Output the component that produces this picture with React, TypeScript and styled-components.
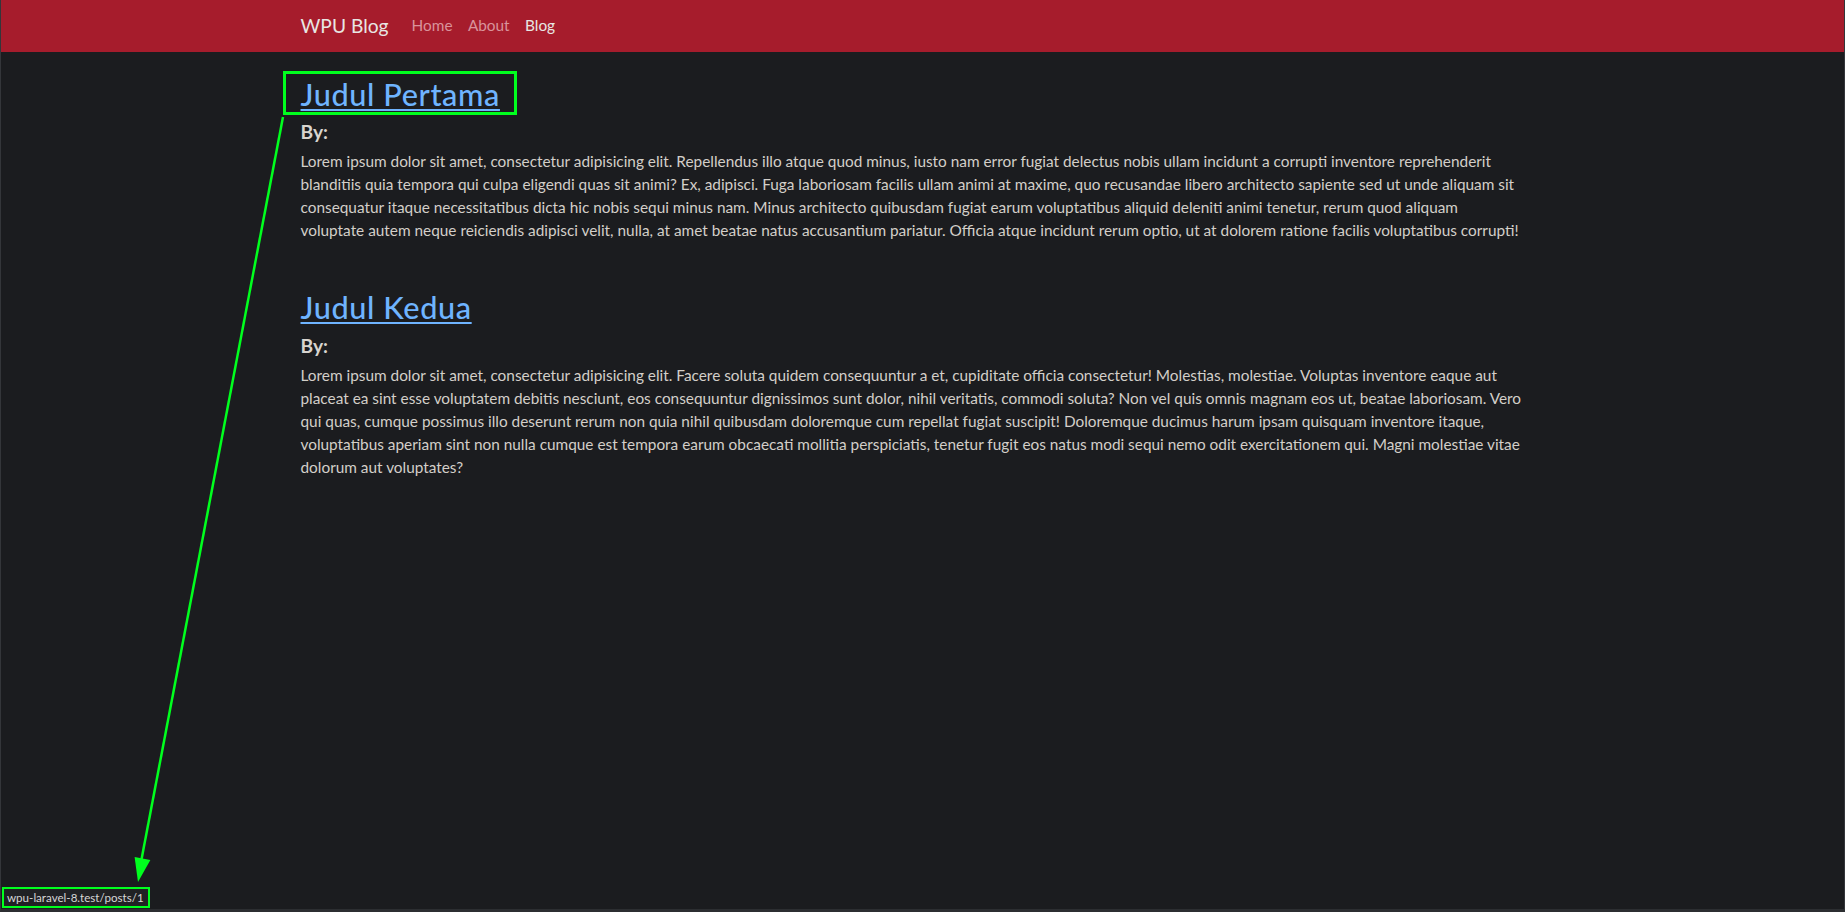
import React from 'react';
import styled, { createGlobalStyle } from 'styled-components';

const GlobalStyle = createGlobalStyle`
  html, body {
    margin: 0;
    padding: 0;
    background: #1b1c1f;
  }
  body {
    font-family: Lato, "Open Sans", "Noto Sans", sans-serif;
    color: #d3cfc9;
  }
`;

const Page = styled.div`
  position: relative;
  height: 100vh;
  box-sizing: border-box;
  border-left: 1px solid #34363a;
  border-right: 1px solid #34363a;
  border-bottom: 3px solid #2c2e31;
  overflow: hidden;
`;

const Navbar = styled.nav`
  height: 52px;
  background: #a61c2c;
  display: flex;
  align-items: center;
`;

const Container = styled.div`
  width: 1244px;
  margin: 0 auto;
`;

const NavInner = styled(Container)`
  display: flex;
  align-items: center;
  padding-bottom: 2px;
`;

const Brand = styled.a`
  font-size: 19.2px;
  color: #e8e6e3;
  text-decoration: none;
  margin-right: 15.4px;
`;

const NavLink = styled.a<{ $active?: boolean }>`
  font-size: 15.36px;
  padding: 0 7.7px;
  text-decoration: none;
  color: ${({ $active }) => ($active ? '#e8e6e3' : '#d9939b')};
`;

const Main = styled(Container)`
  padding-top: 25px;
`;

const Article = styled.article`
  margin-bottom: 48px;
`;

const Title = styled.h2`
  margin: 0 0 6.5px;
  font-size: 30.7px;
  line-height: 1.2;
  font-weight: 500;
  letter-spacing: 0.6px;
  a {
    color: #6fb4ff;
    text-decoration: underline;
    text-decoration-thickness: 2px;
    text-underline-offset: 3px;
  }
`;

const By = styled.h5`
  margin: 0 0 7px;
  font-size: 19.2px;
  line-height: 1.2;
  font-weight: 700;
  color: #d8d4cf;
`;

const Body = styled.p`
  margin: 0;
  font-size: 15.36px;
  line-height: 23px;
  color: #d3cfc9;
  white-space: pre-line;
`;

const Highlight = styled.div`
  position: absolute;
  left: 282px;
  top: 71px;
  width: 234px;
  height: 44px;
  box-sizing: border-box;
  border: 3px solid #00ff1e;
  pointer-events: none;
`;

const StatusBubble = styled.div`
  position: absolute;
  left: 1px;
  bottom: 1px;
  height: 21px;
  padding: 0 4px 0 3px;
  box-sizing: border-box;
  border: 2px solid #00ff1e;
  background: #202124;
  color: #d6d6d6;
  font-size: 11.6px;
  line-height: 17px;
  white-space: nowrap;
`;

const Overlay = styled.svg`
  position: absolute;
  left: 0;
  top: 0;
  pointer-events: none;
`;

const posts = [
  {
    slug: '1',
    title: 'Judul Pertama',
    body: 'Lorem ipsum dolor sit amet, consectetur adipisicing elit. Repellendus illo atque quod minus, iusto nam error fugiat delectus nobis ullam incidunt a corrupti inventore reprehenderit blanditiis quia tempora qui culpa eligendi quas sit animi? Ex, adipisci. Fuga laboriosam facilis ullam animi at maxime, quo recusandae libero architecto sapiente sed ut unde aliquam sit consequatur itaque necessitatibus dicta hic nobis sequi minus nam. Minus architecto quibusdam fugiat earum voluptatibus aliquid deleniti animi tenetur, rerum quod aliquam\nvoluptate autem neque reiciendis adipisci velit, nulla, at amet beatae natus accusantium pariatur. Officia atque incidunt rerum optio, ut at dolorem ratione facilis voluptatibus corrupti!',
  },
  {
    slug: '2',
    title: 'Judul Kedua',
    body: 'Lorem ipsum dolor sit amet, consectetur adipisicing elit. Facere soluta quidem consequuntur a et, cupiditate officia consectetur! Molestias, molestiae. Voluptas inventore eaque aut placeat ea sint esse voluptatem debitis nesciunt, eos consequuntur dignissimos sunt dolor, nihil veritatis, commodi soluta? Non vel quis omnis magnam eos ut, beatae laboriosam. Vero qui quas, cumque possimus illo deserunt rerum non quia nihil quibusdam doloremque cum repellat fugiat suscipit! Doloremque ducimus harum ipsam quisquam inventore itaque, voluptatibus aperiam sint non nulla cumque est tempora earum obcaecati mollitia perspiciatis, tenetur fugit eos natus modi sequi nemo odit exercitationem qui. Magni molestiae vitae dolorum aut voluptates?',
  },
];

export default function App() {
  return (
    <Page>
      <GlobalStyle />
      <Navbar>
        <NavInner>
          <Brand href="#">WPU Blog</Brand>
          <NavLink href="#">Home</NavLink>
          <NavLink href="#">About</NavLink>
          <NavLink href="#" $active>Blog</NavLink>
        </NavInner>
      </Navbar>
      <Main>
        {posts.map((post) => (
          <Article key={post.slug}>
            <Title>
              <a href={`#posts/${post.slug}`}>{post.title}</a>
            </Title>
            <By>By:</By>
            <Body>{post.body}</Body>
          </Article>
        ))}
      </Main>

      {/* annotation drawn over the screenshot */}
      <Highlight />
      <Overlay width="1845" height="912" viewBox="0 0 1845 912">
        <line x1="282" y1="117" x2="140" y2="862" stroke="#00ff1e" strokeWidth="2.5" />
        <polygon points="137,882 149.4,859.9 133.6,856.9" fill="#00ff1e" />
      </Overlay>
      <StatusBubble>wpu-laravel-8.test/posts/1</StatusBubble>
    </Page>
  );
}
